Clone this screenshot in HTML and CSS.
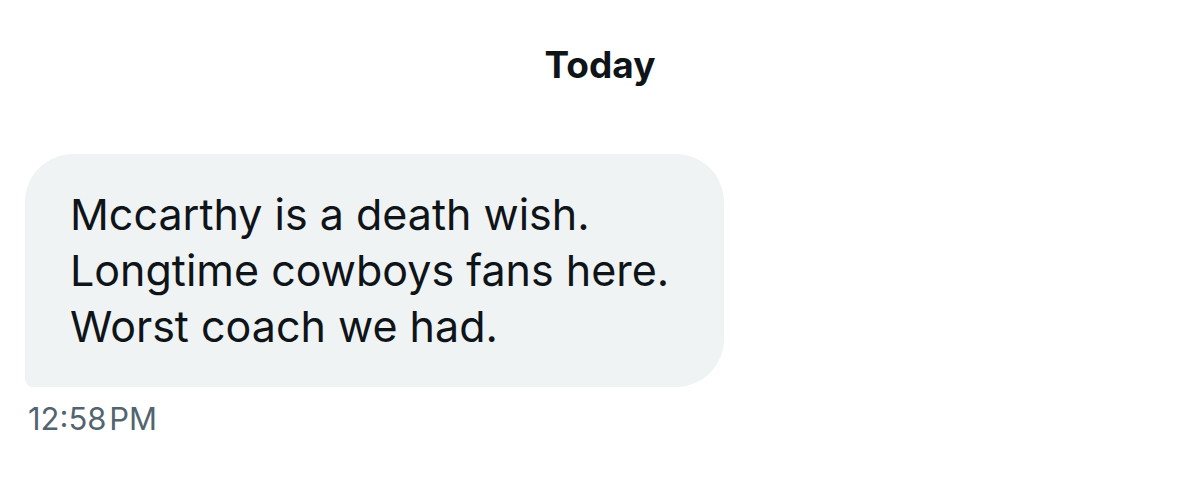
FILE: index.html
```html
<!DOCTYPE html>
<html>
<head>
<meta charset="utf-8">
<link rel="stylesheet" href="styles.css">
</head>
<body>
<div class="page">
  <div class="day">Today</div>
  <div class="msg">
    <div class="bubble">Mccarthy is a death wish.<br>Longtime cowboys fans here.<br>Worst coach we had.</div>
    <div class="time">12:58&#8202;PM</div>
  </div>
</div>
</body>
</html>
```
FILE: styles.css
```css
html, body {
  margin: 0;
  padding: 0;
  background: #ffffff;
}
.page {
  width: 1200px;
  height: 479px;
  font-family: Inter, "Noto Sans", sans-serif;
  color: #0f1419;
  display: flex;
  flex-direction: column;
}
.day {
  text-align: center;
  font-weight: 700;
  font-size: 37px;
  line-height: 40px;
  margin-top: 45px;
}
.msg {
  margin-top: 69px;
  padding-left: 25px;
  display: flex;
  flex-direction: column;
  align-items: flex-start;
}
.bubble {
  box-sizing: border-box;
  width: 699px;
  height: 233px;
  background: #eff3f4;
  border-radius: 48px 48px 48px 8px;
  padding: 32px 20px 0 45px;
  font-size: 43px;
  line-height: 56px;
}
.time {
  margin-top: 15px;
  padding-left: 3px;
  font-size: 31px;
  line-height: 34px;
  color: #536471;
}
```
